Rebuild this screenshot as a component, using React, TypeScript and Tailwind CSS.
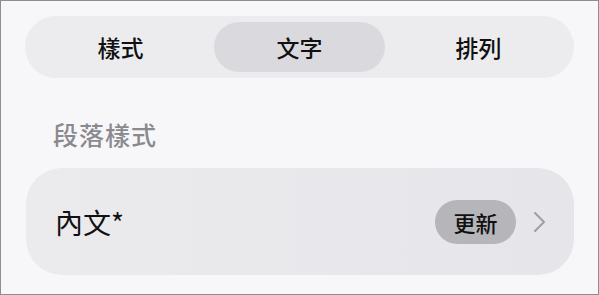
import { useState } from 'react';

const tabs = ['樣式', '文字', '排列'];

export default function App() {
  const [active, setActive] = useState(1);

  return (
    <div
      className="w-[599px] h-[295px] border border-[#8e8e90] bg-[#f7f7f9] px-6 pt-[15px] text-[#111]"
      style={{ fontFamily: '"Noto Sans CJK TC", "Noto Sans", sans-serif' }}
    >
      <div className="grid grid-cols-3 h-[62px] p-[6px] rounded-full bg-[#ececef]">
        {tabs.map((t, i) => (
          <button
            key={t}
            onClick={() => setActive(i)}
            className={`mx-[4px] rounded-full text-[23px] font-medium leading-none ${
              i === active ? 'bg-[#dadade]' : ''
            }`}
          >
            {t}
          </button>
        ))}
      </div>

      <div className="h-[90px] flex items-center pt-[23px] pl-7">
        <span className="text-[25px] font-medium text-[#8a8a8e] leading-none tracking-[1px]">段落樣式</span>
      </div>

      <div className="ml-px h-[107px] rounded-[36px] bg-gradient-to-r from-[#ebebee] to-[#e6e6ea] flex items-center pl-[29px] pr-[28px]">
        <span className="text-[28px] leading-none">內文*</span>
        <div className="ml-auto flex items-center gap-[17px]">
          <span className="w-[81px] h-[44px] rounded-full bg-[#b6b6ba] flex items-center justify-center text-[22px] font-medium leading-none">
            更新
          </span>
          <svg width="13" height="22" viewBox="0 0 13 22" fill="none">
            <path d="M2 2l9 9-9 9" stroke="#9e9ea3" strokeWidth="2" strokeLinecap="round" strokeLinejoin="round" />
          </svg>
        </div>
      </div>
    </div>
  );
}
